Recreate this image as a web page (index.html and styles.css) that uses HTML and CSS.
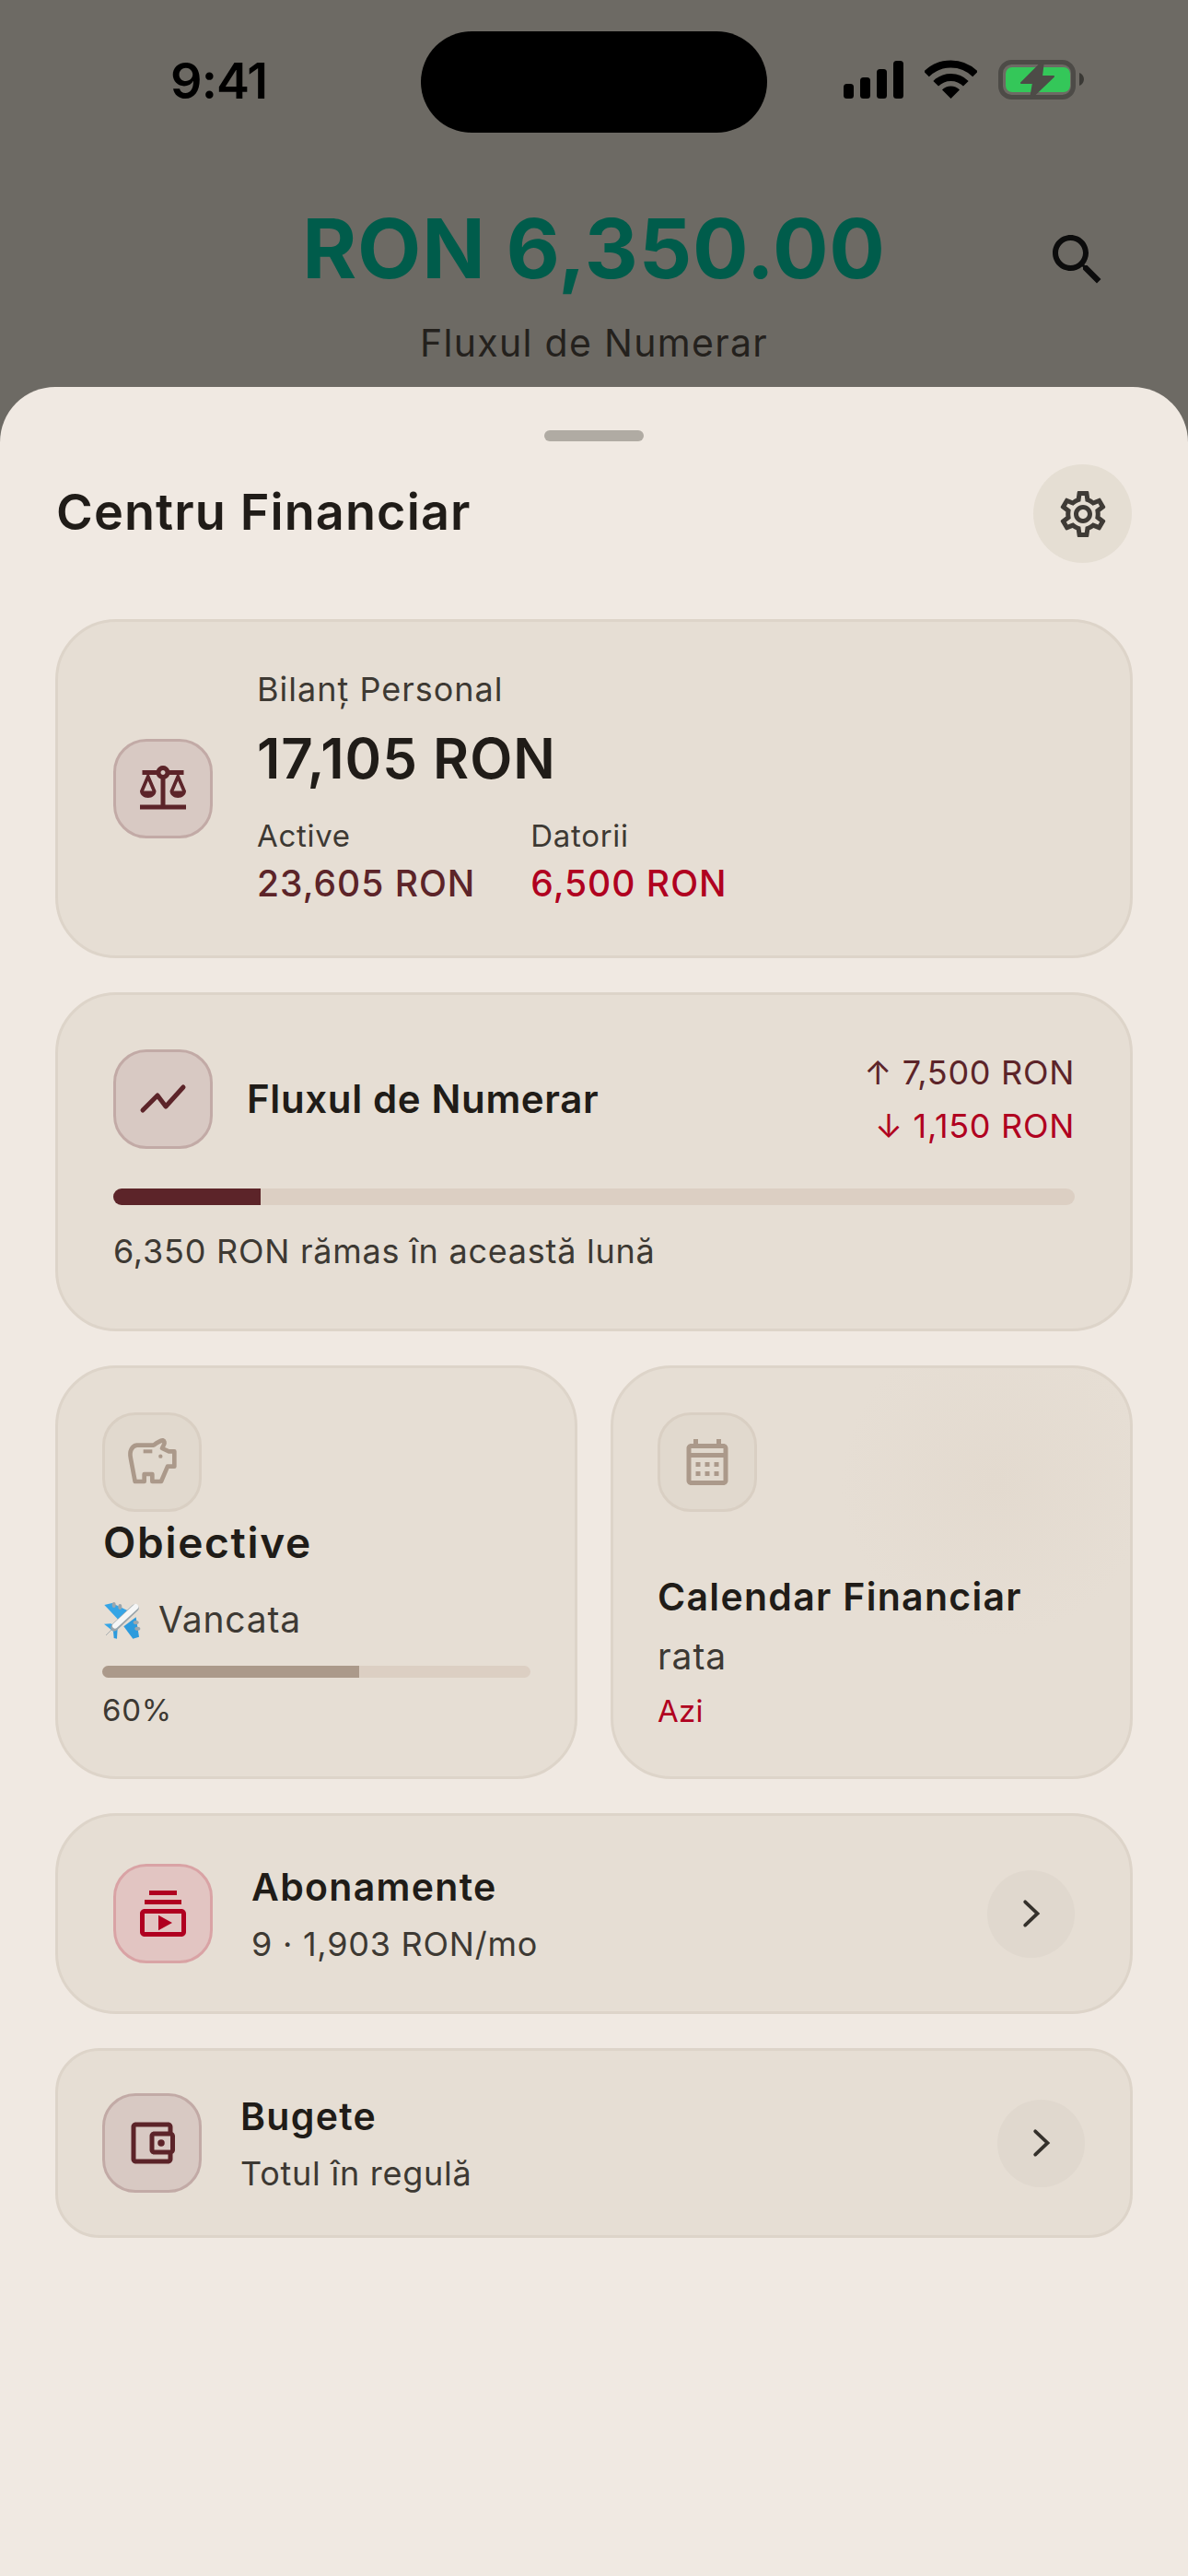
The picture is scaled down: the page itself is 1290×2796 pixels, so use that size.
FILE: index.html
```html
<!DOCTYPE html>
<html lang="ro">
<head>
  <meta charset="UTF-8">
  <title>Centru Financiar</title>
  <link rel="stylesheet" href="styles.css">
</head>
<body>
  <div class="screen">
    <div class="status-bar">
      <span class="clock">9:41</span>
      <div class="island"></div>
      <div class="status-icons">
        <svg class="signal" width="65" height="41" viewBox="0 0 65 41">
          <rect x="0" y="25" width="11" height="16" rx="3.5"/>
          <rect x="18" y="18" width="11" height="23" rx="3.5"/>
          <rect x="36" y="9" width="11" height="32" rx="3.5"/>
          <rect x="54" y="0" width="11" height="41" rx="3.5"/>
        </svg>
        <svg class="wifi" width="57" height="42" viewBox="0 0 57 42">
          <path d="M2 15.5A37.5 37.5 0 0 1 55 15.5" fill="none" stroke="#000" stroke-width="8"/>
          <path d="M12.2 25.7A23 23 0 0 1 44.8 25.7" fill="none" stroke="#000" stroke-width="8"/>
          <path d="M28.5 42L19 32.5A13.4 13.4 0 0 1 38 32.5Z"/>
        </svg>
        <svg class="battery" width="93" height="44" viewBox="0 0 93 44">
          <rect x="2.5" y="2.5" width="79" height="38" rx="12" fill="none" stroke="#4d4b47" stroke-width="5"/>
          <rect x="8" y="8" width="70" height="27" rx="7" fill="#34c759"/>
          <path d="M88 14c3 1 5 4 5 7s-2 6-5 7z" fill="#3a3935"/>
          <path d="M49 1L25 25h13l-3 17 25-24H47z" fill="#4d4b47" stroke="#4d4b47" stroke-width="2" stroke-linejoin="round"/>
        </svg>
      </div>
    </div>

    <div class="hero">
      <div class="hero-main">
        <div class="hero-amount">RON 6,350.00</div>
        <div class="hero-label">Fluxul de Numerar</div>
      </div>
      <svg class="search-icon" width="72" height="72" viewBox="0 0 24 24"><path d="M15.5 14h-.79l-.28-.27C15.41 12.59 16 11.11 16 9.5 16 5.91 13.09 3 9.5 3S3 5.91 3 9.5 5.91 16 9.5 16c1.61 0 3.09-.59 4.23-1.57l.27.28v.79l5 4.99L20.49 19l-4.99-5zm-6 0C7.01 14 5 11.99 5 9.5S7.01 5 9.5 5 14 7.01 14 9.5 11.99 14 9.5 14z"/></svg>
    </div>

    <div class="sheet">
      <div class="handle"></div>
      <div class="sheet-head">
        <h1>Centru Financiar</h1>
        <div class="gear-btn">
          <svg width="60" height="60" viewBox="0 0 24 24"><path d="M19.43 12.98c.04-.32.07-.64.07-.98 0-.34-.03-.66-.07-.98l2.11-1.65c.19-.15.24-.42.12-.64l-2-3.46c-.09-.16-.26-.25-.44-.25-.06 0-.12.01-.17.03l-2.49 1c-.52-.4-1.08-.73-1.69-.98l-.38-2.65C14.46 2.18 14.25 2 14 2h-4c-.25 0-.46.18-.49.42l-.38 2.65c-.61.25-1.17.59-1.69.98l-2.49-1c-.06-.02-.12-.03-.18-.03-.17 0-.34.09-.43.25l-2 3.46c-.13.22-.07.49.12.64l2.11 1.65c-.04.32-.07.65-.07.98 0 .33.03.66.07.98l-2.11 1.65c-.19.15-.24.42-.12.64l2 3.46c.09.16.26.25.44.25.06 0 .12-.01.17-.03l2.49-1c.52.4 1.08.73 1.69.98l.38 2.65c.03.24.24.42.49.42h4c.25 0 .46-.18.49-.42l.38-2.65c.61-.25 1.17-.59 1.69-.98l2.49 1c.06.02.12.03.18.03.17 0 .34-.09.43-.25l2-3.46c.12-.22.07-.49-.12-.64l-2.11-1.65zm-1.98-1.71c.04.31.05.52.05.73 0 .21-.02.43-.05.73l-.14 1.13.89.7 1.08.84-.7 1.21-1.27-.51-1.04-.42-.9.68c-.43.32-.84.56-1.25.73l-1.06.43-.16 1.13-.2 1.35h-1.4l-.19-1.35-.16-1.13-1.06-.43c-.43-.18-.83-.41-1.23-.71l-.91-.7-1.06.43-1.27.51-.7-1.21 1.08-.84.89-.7-.14-1.13c-.03-.31-.05-.54-.05-.74s.02-.43.05-.73l.14-1.13-.89-.7-1.08-.84.7-1.21 1.27.51 1.04.42.9-.68c.43-.32.84-.56 1.25-.73l1.06-.43.16-1.13.2-1.35h1.39l.19 1.35.16 1.13 1.06.43c.43.18.83.41 1.23.71l.91.7 1.06-.43 1.27-.51.7 1.21-1.07.85-.89.7.14 1.13zM12 8c-2.21 0-4 1.79-4 4s1.79 4 4 4 4-1.79 4-4-1.79-4-4-4zm0 6c-1.1 0-2-.9-2-2s.9-2 2-2 2 .9 2 2-.9 2-2 2z"/></svg>
        </div>
      </div>

      <div class="cards">
        <div class="card balance-card">
          <div class="icon-box icon-maroon balance-icon">
            <svg width="60" height="60" viewBox="0 0 24 24"><path d="M13 7.83c.85-.3 1.53-.98 1.83-1.83H18l-3 7c0 1.66 1.57 3 3.5 3s3.5-1.34 3.5-3l-3-7h2V4h-6.17c-.41-1.17-1.52-2-2.83-2s-2.42.83-2.83 2H3v2h2l-3 7c0 1.66 1.57 3 3.5 3S9 14.66 9 13L6 6h3.17c.3.85.98 1.53 1.83 1.83V19H2v2h20v-2h-9V7.83zM20.37 13h-3.74l1.87-4.36L20.37 13zm-13 0H3.63L5.5 8.64 7.37 13zM12 6c-.55 0-1-.45-1-1s.45-1 1-1 1 .45 1 1-.45 1-1 1z"/></svg>
          </div>
          <div class="balance-info">
            <div class="balance-label">Bilanț Personal</div>
            <div class="balance-value">17,105 RON</div>
            <div class="balance-cols">
              <div>
                <div class="col-label">Active</div>
                <div class="col-value maroon">23,605 RON</div>
              </div>
              <div>
                <div class="col-label">Datorii</div>
                <div class="col-value red">6,500 RON</div>
              </div>
            </div>
          </div>
        </div>

        <div class="card flow-card">
          <div class="flow-top">
            <div class="icon-box icon-maroon">
              <svg width="60" height="60" viewBox="0 0 60 60"><polyline points="8,42 24,26 33,38 52,17" fill="none" stroke="#5c2429" stroke-width="5" stroke-linecap="round" stroke-linejoin="round"/></svg>
            </div>
            <div class="flow-title">Fluxul de Numerar</div>
            <div class="flow-amounts">
              <div class="maroon">↑ 7,500 RON</div>
              <div class="red">↓ 1,150 RON</div>
            </div>
          </div>
          <div class="bar flow-bar"><div class="bar-fill flow-fill" style="width: 15.3%"></div></div>
          <div class="flow-note">6,350 RON rămas în această lună</div>
        </div>

        <div class="tile-grid">
          <div class="card tile goals-tile">
            <div class="icon-box icon-muted">
              <svg width="90" height="90" viewBox="0 6 270 270">
                <path d="M86 86H140C148 80 158 72 170 70C176 72 177 78 174 84L168 96L190 106H208V155H186L165 204H136V180H110V204H80L66 130C60 105 70 88 86 86Z" fill="none" stroke="#ab998a" stroke-width="14" stroke-linejoin="round"/>
                <rect x="107" y="100" width="29" height="12"/>
                <circle cx="163" cy="122" r="6.5"/>
              </svg>
            </div>
            <div class="goals-title">Obiective</div>
            <div class="goal-name">
              <svg class="plane" width="60" height="55" viewBox="0 0 180 165">
                <path d="M25 36L50 30L108 58L78 92Z" fill="#35a5e6"/>
                <path d="M128 76L138 140L118 146L88 106Z" fill="#2d9bdd"/>
                <path d="M24 98L46 97L68 110L54 122Z" fill="#35a5e6"/>
                <path d="M54 122L68 110L66 146L56 144Z" fill="#2d9bdd"/>
                <ellipse cx="56" cy="36" rx="6" ry="9" fill="#9aa6ad"/>
                <ellipse cx="76" cy="42" rx="6" ry="9" fill="#9aa6ad"/>
                <ellipse cx="128" cy="93" rx="9" ry="6" fill="#9aa6ad"/>
                <ellipse cx="133" cy="113" rx="9" ry="6" fill="#9aa6ad"/>
                <path d="M50 115L30 135" stroke="#a9aeb0" stroke-width="3"/>
                <path d="M125 46L58 109" stroke="#99a4aa" stroke-width="25" stroke-linecap="round"/>
                <path d="M127 42L60 104" stroke="#f5f6f6" stroke-width="18" stroke-linecap="round"/>
              </svg>
              <span>Vancata</span>
            </div>
            <div class="bar goal-bar"><div class="bar-fill goal-fill" style="width: 60%"></div></div>
            <div class="goal-pct">60%</div>
          </div>

          <div class="card tile calendar-tile">
            <div class="icon-box icon-muted">
              <svg width="60" height="60" viewBox="0 0 24 24"><path d="M19 4h-1V2h-2v2H8V2H6v2H5c-1.1 0-2 .9-2 2v14c0 1.1.9 2 2 2h14c1.1 0 2-.9 2-2V6c0-1.1-.9-2-2-2zm0 16H5V10h14v10zm0-12H5V6h14v2zM9 14H7v-2h2v2zm4 0h-2v-2h2v2zm4 0h-2v-2h2v2zm-8 4H7v-2h2v2zm4 0h-2v-2h2v2zm4 0h-2v-2h2v2z"/></svg>
            </div>
            <div class="calendar-text">
              <div class="calendar-title">Calendar Financiar</div>
              <div class="calendar-item">rata</div>
              <div class="calendar-when red">Azi</div>
            </div>
          </div>
        </div>

        <div class="card row-card subs-card">
          <div class="icon-box icon-red">
            <svg width="60" height="60" viewBox="0 0 24 24"><path d="M4 6h16v2H4zm2-4h12v2H6zm14 8H4c-1.1 0-2 .9-2 2v8c0 1.1.9 2 2 2h16c1.1 0 2-.9 2-2v-8c0-1.1-.9-2-2-2zm0 10H4v-8h16v8zm-10-7.27v6.53L16 16z"/></svg>
          </div>
          <div class="row-text">
            <div class="row-title">Abonamente</div>
            <div class="row-sub">9 · 1,903 RON/mo</div>
          </div>
          <div class="chevron-btn">
            <svg width="60" height="60" viewBox="0 0 60 60"><polyline points="23.2,17.3 36.5,30 23.2,42.6"/></svg>
          </div>
        </div>

        <div class="card row-card budget-card">
          <div class="icon-box icon-maroon">
            <svg width="60" height="60" viewBox="0 0 24 24"><path d="M21 7.28V5c0-1.1-.9-2-2-2H5c-1.11 0-2 .9-2 2v14c0 1.1.89 2 2 2h14c1.1 0 2-.9 2-2v-2.28c.59-.35 1-.98 1-1.72V9c0-.74-.41-1.38-1-1.72zM20 9v6h-7V9h7zM5 19V5h14v2h-6c-1.1 0-2 .9-2 2v6c0 1.1.9 2 2 2h6v2H5z"/><circle cx="16" cy="12" r="1.5"/></svg>
          </div>
          <div class="row-text">
            <div class="row-title">Bugete</div>
            <div class="row-sub">Totul în regulă</div>
          </div>
          <div class="chevron-btn">
            <svg width="60" height="60" viewBox="0 0 60 60"><polyline points="23.2,17.3 36.5,30 23.2,42.6"/></svg>
          </div>
        </div>
      </div>
    </div>
  </div>
</body>
</html>
```

FILE: styles.css
```css
* {
  box-sizing: border-box;
}

body {
  margin: 0;
  font-family: Inter, "Noto Sans", sans-serif;
  color: #201c18;
}

.screen {
  position: relative;
  width: 1290px;
  height: 2796px;
  background: #6d6a64;
  display: flex;
  flex-direction: column;
  overflow: hidden;
}

.maroon { color: #5c2429; }
.red { color: #b00020; }

/* status bar */
.status-bar {
  height: 176px;
  padding: 0 113px 0 185px;
  display: flex;
  justify-content: space-between;
  align-items: flex-start;
}

.clock {
  margin-top: 55px;
  font-size: 54px;
  line-height: 66px;
  font-weight: 600;
  letter-spacing: -0.9px;
  color: #000;
}

.island {
  position: absolute;
  left: 457px;
  top: 34px;
  width: 376px;
  height: 110px;
  border-radius: 55px;
  background: #000;
}

.status-icons {
  margin-top: 65px;
  display: flex;
  align-items: flex-start;
}

.signal { margin-top: 1px; }
.wifi { margin-left: 23px; }
.battery { margin-left: 23px; }

/* top amount */
.hero {
  height: 244px;
  padding-right: 84px;
  display: grid;
  grid-template-columns: 1fr;
  position: relative;
}

.hero-main {
  text-align: center;
  padding-left: 84px;
}

.hero-amount {
  margin-top: 36px;
  font-size: 90px;
  line-height: 116px;
  font-weight: 700;
  letter-spacing: 0.75px;
  color: #005c4b;
}

.hero-label {
  margin-top: 19px;
  font-size: 41px;
  line-height: 50px;
  font-weight: 380;
  letter-spacing: 1.3px;
  color: #24211d;
}

.search-icon {
  position: absolute;
  left: 1134px;
  top: 70px;
  fill: #0c0c0c;
}

/* sheet */
.sheet {
  flex: 1;
  padding: 47px 60px 0;
  background: #f0e9e2;
  border-radius: 60px 60px 0 0;
}

.handle {
  width: 108px;
  height: 12px;
  margin: 0 auto;
  border-radius: 6px;
  background: #b0aba3;
}

.sheet-head {
  margin-top: 25px;
  display: flex;
  justify-content: space-between;
  align-items: center;
}

h1 {
  margin: 0 0 3px 1px;
  font-size: 54px;
  line-height: 66px;
  font-weight: 600;
  letter-spacing: 1.1px;
}

.gear-btn {
  width: 107px;
  height: 107px;
  margin-right: 1px;
  border-radius: 50%;
  background: #e5ded3;
  display: flex;
  align-items: center;
  justify-content: center;
  fill: #3f3b36;
}

.cards {
  margin-top: 61px;
  display: flex;
  flex-direction: column;
  gap: 37px;
}

.card {
  background: #e6ded4;
  border: 3px solid #ddd4c9;
  border-radius: 66px;
}

.icon-box {
  width: 108px;
  height: 108px;
  flex-shrink: 0;
  border-radius: 36px;
  border: 3px solid;
  display: flex;
  align-items: center;
  justify-content: center;
}

.icon-maroon {
  background: #d8c9c3;
  border-color: #c2aaa6;
  fill: #5c2429;
}

.icon-muted {
  background: #e1d9ce;
  border-color: #d9cfc3;
  fill: #ab998a;
}

.icon-red {
  background: #e2c5c2;
  border-color: #d9a3a5;
  fill: #b00020;
}

/* balance */
.balance-card {
  height: 368px;
  padding: 0 0 3px 60px;
  display: flex;
  align-items: center;
  gap: 48px;
}

.balance-icon {
  margin-top: 3px;
}

.balance-label {
  font-size: 36px;
  line-height: 44px;
  font-weight: 380;
  letter-spacing: 1px;
  color: #3d3933;
}

.balance-value {
  margin-top: 17px;
  font-size: 60px;
  line-height: 72px;
  font-weight: 600;
  letter-spacing: 1px;
}

.balance-cols {
  margin-top: 27px;
  display: flex;
  gap: 60px;
}

.col-label {
  font-size: 33px;
  line-height: 42px;
  font-weight: 380;
  letter-spacing: 0.7px;
  color: #3d3933;
}

.col-value {
  margin-top: 7px;
  font-size: 39px;
  line-height: 48px;
  font-weight: 500;
  letter-spacing: 1px;
}

/* cash flow */
.flow-card {
  height: 368px;
  padding: 59px 60px 0;
}

.flow-top {
  height: 108px;
  display: flex;
  align-items: center;
}

.flow-title {
  margin-left: 37px;
  flex: 1;
  font-size: 42px;
  line-height: 52px;
  font-weight: 600;
  letter-spacing: 0.63px;
}

.flow-amounts {
  font-size: 36px;
  line-height: 58px;
  font-weight: 380;
  letter-spacing: 0.7px;
  text-align: right;
}

.bar {
  border-radius: 9px;
  background: #dccfc3;
  overflow: hidden;
}

.bar-fill {
  height: 100%;
}

.flow-bar {
  margin-top: 43px;
  height: 18px;
}

.flow-fill { background: #5c2429; }

.flow-note {
  margin-top: 28px;
  font-size: 36px;
  line-height: 44px;
  font-weight: 380;
  letter-spacing: 0.75px;
  color: #3d3933;
}

/* two tiles */
.tile-grid {
  display: grid;
  grid-template-columns: 1fr 1fr;
  gap: 36px;
}

.tile {
  height: 449px;
  padding: 48px;
  display: flex;
  flex-direction: column;
  align-items: flex-start;
}

.calendar-tile {
  background: radial-gradient(circle at 74% 28%, #e3dacf 0, #e6ded4 32%);
}

.goals-title {
  margin: 5px 0 0 1px;
  font-size: 46px;
  line-height: 56px;
  font-weight: 600;
  letter-spacing: 1.7px;
}

.goal-name {
  margin-top: 32px;
  display: flex;
  align-items: center;
  font-size: 39px;
  line-height: 48px;
  font-weight: 380;
  letter-spacing: 0.8px;
  color: #3d3933;
}

.plane {
  margin: -4px 7px -3px -6px;
}

.goal-bar {
  margin-top: 26px;
  width: 100%;
  height: 13px;
}

.goal-fill { background: #ab998a; }

.goal-pct {
  margin-top: 15px;
  font-size: 33px;
  line-height: 40px;
  font-weight: 380;
  letter-spacing: 0.7px;
  color: #3d3933;
}

.calendar-text {
  margin-top: 67px;
}

.calendar-title {
  font-size: 41px;
  line-height: 50px;
  font-weight: 600;
  letter-spacing: 1.3px;
}

.calendar-item {
  margin-top: 16px;
  font-size: 39px;
  line-height: 48px;
  font-weight: 380;
  letter-spacing: 0.9px;
  color: #3d3933;
}

.calendar-when {
  margin-top: 15px;
  font-size: 33px;
  line-height: 40px;
  font-weight: 380;
  letter-spacing: 0.3px;
}

/* rows */
.row-card {
  display: flex;
  align-items: center;
  gap: 42px;
}

.subs-card {
  height: 218px;
  padding: 0 60px;
}

.budget-card {
  height: 206px;
  padding: 0 49px 0 48px;
  border-radius: 48px;
}

.row-text {
  flex: 1;
}

.row-title {
  font-size: 41px;
  line-height: 50px;
  font-weight: 600;
  letter-spacing: 1.3px;
}

.row-sub {
  margin-top: 15px;
  font-size: 36px;
  line-height: 44px;
  font-weight: 380;
  letter-spacing: 0.75px;
  color: #3d3933;
}

.chevron-btn {
  width: 95px;
  height: 95px;
  border-radius: 50%;
  background: #e0d8ce;
  display: flex;
  align-items: center;
  justify-content: center;
  fill: none;
  stroke: #35312c;
  stroke-width: 3.8;
  stroke-linejoin: miter;
  stroke-linecap: round;
}
```
